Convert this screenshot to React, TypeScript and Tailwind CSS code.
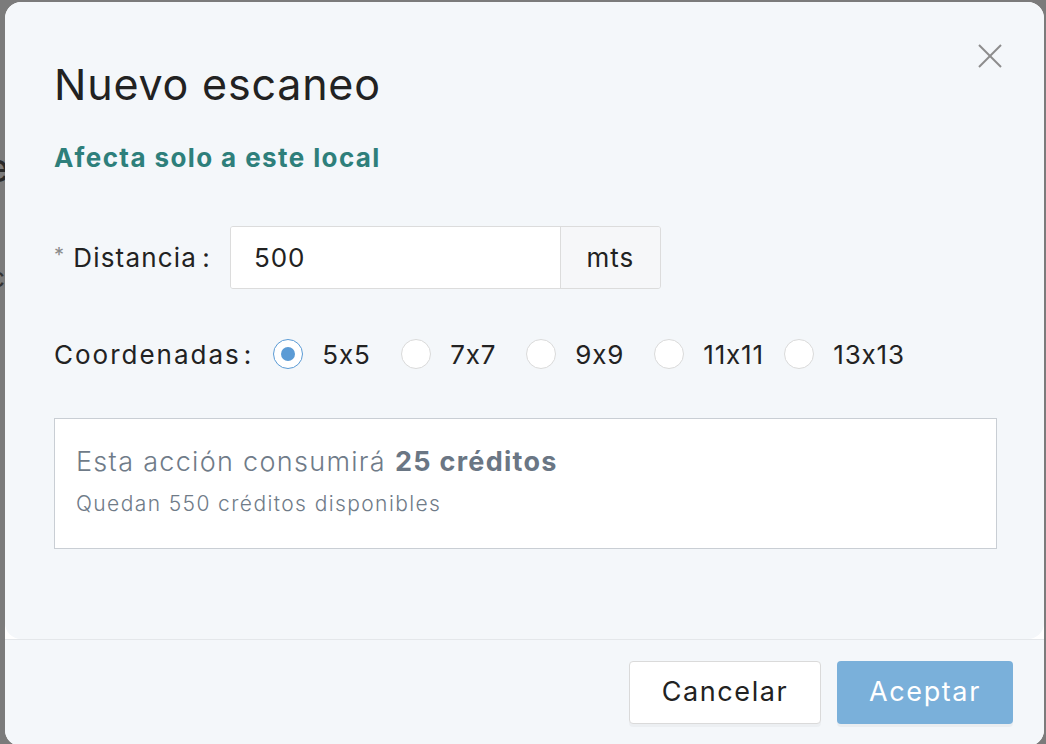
import React, { useState } from 'react';

const font = { fontFamily: 'Inter, "Noto Sans", sans-serif' };

const sizes = [
  { label: '5x5', w: 'w-[128px]' },
  { label: '7x7', w: 'w-[125px]' },
  { label: '9x9', w: 'w-[128px]' },
  { label: '11x11', w: 'w-[130px]' },
  { label: '13x13', w: 'w-auto' },
];

const Radio = ({ checked }: { checked: boolean }) => (
  <span
    className={
      checked
        ? 'w-[30px] h-[30px] shrink-0 rounded-full border-[1.5px] border-[#5b9bd5] bg-white flex items-center justify-center'
        : 'w-[30px] h-[30px] shrink-0 rounded-full border-[1.5px] border-[#dadada] bg-white'
    }
  >
    {checked && <span className="w-[14px] h-[14px] rounded-full bg-[#5b9bd5]" />}
  </span>
);

export default function App() {
  const [grid, setGrid] = useState('5x5');
  const [distance, setDistance] = useState('500');

  return (
    <div
      className="relative h-[744px] w-[1046px] overflow-hidden bg-[#7b7b7b] [font-feature-settings:'calt'_0]"
      style={font}
    >
      {/* page behind the overlay */}
      <span className="absolute left-[-14px] top-[138px] text-[40px] text-[#2a2a2a]">e</span>
      <span className="absolute left-[-10px] top-[258px] text-[26px] text-[#333]">c</span>

      <div className="relative ml-[5px] mt-[2px] w-[1039px] h-[744px] rounded-[16px] bg-white overflow-hidden flex flex-col">
        {/* body */}
        <div className="relative h-[637px] rounded-[16px] bg-[#f4f7fa] pl-[49px] pr-[47px] pt-[56px]">
          <button className="absolute right-[42px] top-[42px] w-[24px] h-[24px]">
            <svg width="24" height="24" viewBox="0 0 24 24" fill="none" stroke="#8c8c8c" strokeWidth="2" strokeLinecap="butt">
              <path d="M1 1 L23 23" />
              <path d="M23 1 L1 23" />
            </svg>
          </button>

          <h1 className="text-[43px] leading-[52px] text-[#222] tracking-[0.8px]">Nuevo escaneo</h1>

          <p className="mt-[32px] text-[26px] leading-[32px] font-bold text-[#2e7f7b] tracking-[1.4px]">
            Afecta solo a este local
          </p>

          <div className="mt-[52px] flex items-center">
            <label className="flex items-center text-[26px] text-[#222] tracking-[1.2px]">
              <span className="mr-[8px] text-[20px] text-[#8a8a8a] -mt-[6px]">*</span>
              Distancia
              <span className="ml-[5px]">:</span>
            </label>
            <div className="ml-[19px] flex h-[63px] w-[431px] rounded-[3px] border-[1.5px] border-[#dcdcdc] overflow-hidden">
              <input
                value={distance}
                onChange={(e) => setDistance(e.target.value)}
                className="flex-1 min-w-0 bg-white px-[23px] text-[26px] text-[#222] tracking-[1px] outline-none"
              />
              <div className="w-[100px] border-l-[1.5px] border-[#dcdcdc] bg-[#f6f7f9] flex items-center justify-center text-[26px] text-[#222] tracking-[1px]">
                mts
              </div>
            </div>
          </div>

          <div className="mt-[35px] flex items-center h-[60px]">
            <span className="text-[26px] text-[#222] tracking-[2px]">
              Coordenadas<span className="ml-[3px]">:</span>
            </span>
            <div className="ml-[20px] flex items-center">
              {sizes.map((s) => (
                <button key={s.label} onClick={() => setGrid(s.label)} className={`flex items-center gap-[19px] ${s.w}`}>
                  <Radio checked={grid === s.label} />
                  <span className="text-[26px] text-[#222] tracking-[0.8px]">{s.label}</span>
                </button>
              ))}
            </div>
          </div>

          <div className="mt-[34px] h-[131px] border-[1.5px] border-[#c9ced4] bg-white px-[21px] pt-[26px]">
            <p className="text-[27px] leading-[34px] font-light text-[#6f7b88] tracking-[1.3px]">
              Esta acción consumirá <span className="font-bold text-[#6a7684]">25 créditos</span>
            </p>
            <p className="mt-[11px] text-[21px] leading-[28px] font-light text-[#6f7b88] tracking-[1.4px]">
              Quedan 550 créditos disponibles
            </p>
          </div>
        </div>

        {/* footer */}
        <div className="flex-1 border-t border-[#e4e7ea] bg-[#f4f7fa] flex justify-end items-start pt-[21px] pr-[31px] gap-[16px]">
          <button className="h-[63px] w-[192px] rounded-[4px] border-[1.5px] border-[#dadada] bg-white text-[27px] text-[#222] tracking-[1.6px] shadow-[0_3px_0_rgba(0,0,0,0.03)]">
            Cancelar
          </button>
          <button className="h-[63px] w-[176px] rounded-[4px] bg-[#7ab0da] text-[27px] text-white tracking-[1.6px] shadow-[0_3px_0_rgba(0,0,0,0.04)]">
            Aceptar
          </button>
        </div>
      </div>
    </div>
  );
}
